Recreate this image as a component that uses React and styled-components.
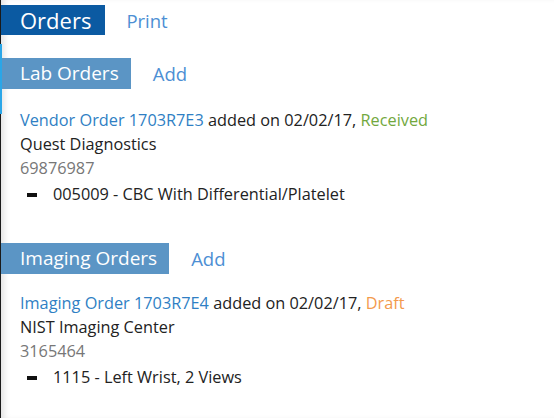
import styled, { createGlobalStyle } from "styled-components";

const Global = createGlobalStyle`
  html, body {
    margin: 0;
    padding: 0;
    background: #fff;
  }
  body {
    font-family: "Open Sans", "DejaVu Sans", sans-serif;
    color: #222;
  }
`;

const Page = styled.div`
  position: relative;
  min-height: 100vh;
  box-sizing: border-box;
  border-left: 1px solid #1a1a1a;
  box-shadow: inset 6px 0 6px -3px rgba(0, 0, 0, 0.12);
  padding-top: 5px;
`;

const EdgeAccent = styled.div`
  position: absolute;
  left: -1px;
  top: 44px;
  width: 2px;
  height: 70px;
  background: #2aa6e8;
`;

const HeaderRow = styled.div`
  display: flex;
  align-items: center;
  gap: ${(p) => p.gap || 22}px;
  margin-top: ${(p) => p.top || 0}px;
`;

const TitleBox = styled.div`
  background: ${(p) => (p.main ? "#0b5aa2" : "#5b95c5")};
  color: #fff;
  font-size: ${(p) => (p.main ? 22 : 19)}px;
  height: ${(p) => (p.main ? 30 : 31)}px;
  line-height: ${(p) => (p.main ? 30 : 31)}px;
  padding: 0 ${(p) => (p.main ? 14 : 12)}px 0 19px;
  white-space: nowrap;
`;

const HeaderLink = styled.a`
  color: #4d8fd4;
  font-size: 18.5px;
  text-decoration: none;
  cursor: pointer;
`;

const Order = styled.div`
  padding-left: 19px;
  margin-top: ${(p) => p.top}px;
  font-size: 16.3px;
  line-height: 24px;
`;

const OrderLink = styled.a`
  color: #2f7fc4;
  text-decoration: none;
`;

const Status = styled.span`
  color: ${(p) => (p.kind === "draft" ? "#f39a4c" : "#72a83e")};
`;

const Muted = styled.div`
  color: #777;
`;

const ItemList = styled.ul`
  list-style: none;
  margin: 2px 0 0;
  padding: 0;
`;

const Item = styled.li`
  display: flex;
  align-items: center;
  line-height: 25px;
  padding-left: 7px;
`;

const Dash = styled.span`
  display: inline-block;
  width: 10px;
  height: 4px;
  background: #111;
  margin-right: 16px;
`;

function Section({ title, top, gap, order }) {
  return (
    <>
      <HeaderRow top={top} gap={gap}>
        <TitleBox>{title}</TitleBox>
        <HeaderLink>Add</HeaderLink>
      </HeaderRow>
      <Order top={order.top}>
        <div>
          <OrderLink>{order.label}</OrderLink> added on {order.date},{" "}
          <Status kind={order.statusKind}>{order.status}</Status>
        </div>
        <div>{order.vendor}</div>
        <Muted>{order.number}</Muted>
        <ItemList>
          {order.items.map((it) => (
            <Item key={it}>
              <Dash />
              {it}
            </Item>
          ))}
        </ItemList>
      </Order>
    </>
  );
}

export default function App() {
  return (
    <Page>
      <Global />
      <EdgeAccent />
      <HeaderRow gap={21}>
        <TitleBox main>Orders</TitleBox>
        <HeaderLink>Print</HeaderLink>
      </HeaderRow>
      <Section
        title="Lab Orders"
        top={23}
        gap={22}
        order={{
          top: 19,
          label: "Vendor Order 1703R7E3",
          date: "02/02/17",
          status: "Received",
          statusKind: "received",
          vendor: "Quest Diagnostics",
          number: "69876987",
          items: ["005009 - CBC With Differential/Platelet"],
        }}
      />
      <Section
        title="Imaging Orders"
        top={36}
        gap={22}
        order={{
          top: 17,
          label: "Imaging Order 1703R7E4",
          date: "02/02/17",
          status: "Draft",
          statusKind: "draft",
          vendor: "NIST Imaging Center",
          number: "3165464",
          items: ["1115 - Left Wrist, 2 Views"],
        }}
      />
    </Page>
  );
}
